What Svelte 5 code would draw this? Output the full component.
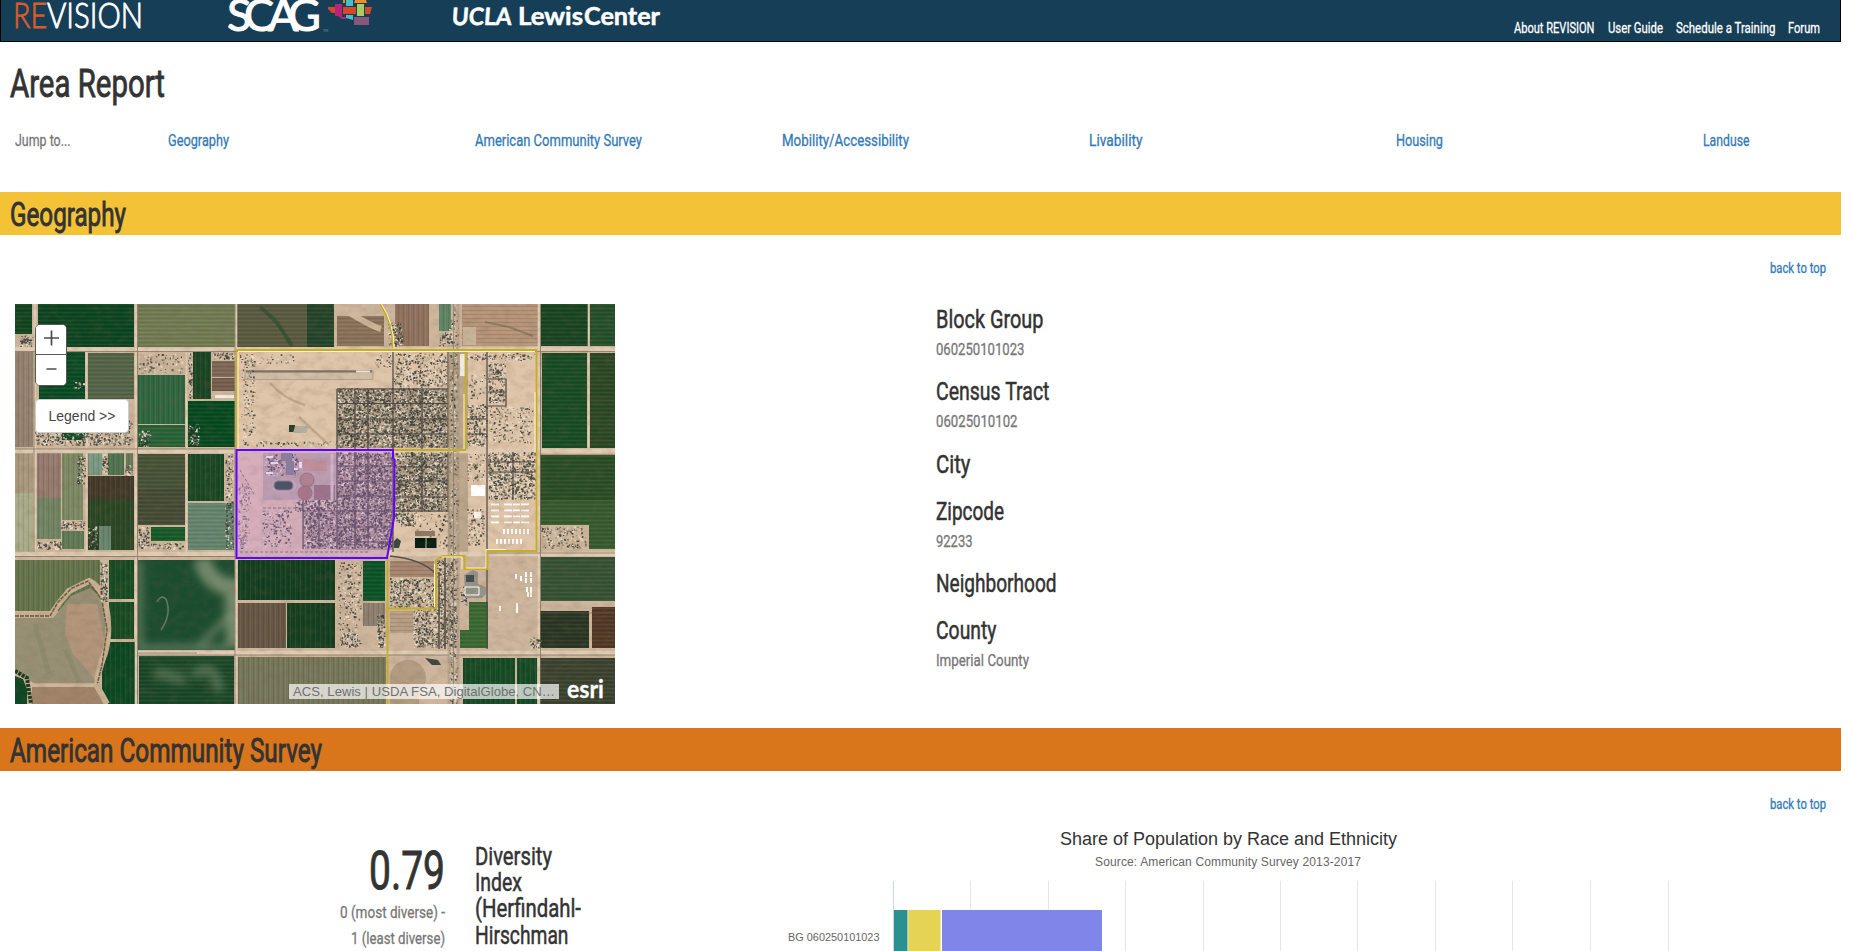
<script>
  const links = [
    ['About REVISION', 80.5], ['User Guide', 55], ['Schedule a Training', 99.5], ['Forum', 32]
  ];
  const jumps = [
    ['Geography', 61], ['American Community Survey', 167], ['Mobility/Accessibility', 127],
    ['Livability', 53.5], ['Housing', 47], ['Landuse', 46.5]
  ];
  const facts = [
    ['Block Group', 107.5, '060250101023', 88.5], ['Census Tract', 113.5, '06025010102', 81.5],
    ['City', 34.5, '', 0], ['Zipcode', 68, '92233', 36.5], ['Neighborhood', 120.5, '', 0],
    ['County', 60.5, 'Imperial County', 93]
  ];
  const indexLines = [['Diversity', 77], ['Index', 47], ['(Herfindahl-', 106], ['Hirschman', 93.5]];
  const gridLines = [970.5, 1048.5, 1125.5, 1203.5, 1280.5, 1357.5, 1435.5, 1512.5, 1590.5, 1668.5];

  // Farm parcels: x, y, width, height, colour, row direction
  const fields = [
    [0,0,17,30,'#10451f','h'],[23,0,96,43,'#0d4521','h'],[123,0,97,43,'#737c54','h'],[222,0,70,43,'#5a5b40','h'],[292,0,27,43,'#25452a','h'],
    [0,48,18,95,'#958370','v'],[24,48,46,47,'#084c24','h'],[73,49,46,46,'#546548','h'],[123,71,47,49,'#306640','v'],
    [123,121,47,22,'#296338','h'],[178,48,18,47,'#1b4624','v'],[197,57,23,16,'#7f6857','h'],[197,74,23,13,'#765f4e','h'],[173,97,47,46,'#064a20','h'],[47,127,23,9,'#135529','h'],
    [0,149,18,40,'#aa997f','v'],[0,189,18,62,'#aaad89','v'],[22,149,24,45,'#967b6f','v'],[22,194,24,41,'#728565','v'],[47,149,21,67,'#7d8a65','v'],[47,227,22,18,'#607b55','v'],
    [73,149,14,22,'#7a9a82','v'],[93,149,16,22,'#507350','v'],[111,149,7,18,'#68795a','v'],[73,172,46,23,'#443a2a','v'],[73,195,46,51,'#2b4726','v'],[84,222,12,24,'#69866f','v'],
    [123,150,47,35,'#465337','h'],[123,185,47,36,'#444c36','h'],[136,223,34,14,'#155c28','h'],[173,150,36,47,'#1b4824','v'],[173,199,46,47,'#65866f','h'],
    [0,256,85,51,'#65754b','v'],[94,256,25,39,'#174c23','v'],[94,298,25,37,'#184c23','v'],[87,338,33,62,'#0d4822','v'],
    [123,256,97,90,'#1c4c2f','x'],[124,352,95,48,'#194727','h'],[223,256,97,40,'#143f20','v'],[223,299,48,45,'#665646','v'],[272,299,48,45,'#164020','v'],
    [223,353,148,47,'#77775a','v'],[348,257,22,40,'#0a5428','h'],[348,299,22,23,'#8e7f6f','v'],
    [322,12,47,30,'#8b735b','h'],[380,0,34,42,'#90735f','v'],[424,0,12,27,'#5e8564','v'],[447,0,76,42,'#b6957a','h'],
    [526,0,47,42,'#194522','h'],[575,0,25,42,'#24502a','h'],[527,49,45,95,'#184c24','h'],[575,49,25,95,'#2b4824','h'],[525,151,75,45,'#294e24','h'],[525,196,75,25,'#365b2f','h'],[574,220,26,25,'#365b2f','h'],
    [526,253,74,44,'#365234','h'],[525,307,49,37,'#2a3723','h'],[577,303,23,41,'#523925','h'],
    [375,257,44,16,'#a78670','h'],[375,307,23,22,'#b99e83','h'],[454,298,19,46,'#3b6934','h'],[445,326,28,18,'#3b6934','h'],[448,354,52,46,'#164c25','v'],[502,354,20,46,'#164c25','v'],[525,354,75,46,'#3b432f','h']
  ];

  let seed = 4817;
  const rnd = () => ((seed = (seed * 16807) % 2147483647) / 2147483647);
  function specks(x, y, w, h, n, s = 1.5) {
    let d = '';
    for (let i = 0; i < n; i++) {
      const a = 0.6 + rnd() * s, b = 0.6 + rnd() * s;
      d += `M${(x + rnd() * (w - a)).toFixed(1)} ${(y + rnd() * (h - b)).toFixed(1)}h${a.toFixed(1)}v${b.toFixed(1)}h-${a.toFixed(1)}z`;
    }
    return d;
  }

  // Built-up areas: x, y, width, height, density
  const built = [
    [322,84,111,60,.3],[380,49,53,34,.11],[452,100,21,43,.2],[473,58,18,42,.2],[380,148,53,60,.3],[473,148,48,48,.24],
    [452,49,68,8,.12],[474,102,45,38,.07],[454,70,18,26,.06],[20,116,98,26,.18],[58,75,12,11,.18],[5,31,14,12,.25],[123,126,14,17,.18],
    [173,49,5,46,.18],[173,119,12,23,.2],[123,50,46,20,.06],[197,48,23,8,.18],[62,152,9,29,.22],[87,150,7,20,.18],[110,161,8,11,.18],
    [46,217,24,9,.2],[73,222,10,24,.2],[123,223,12,22,.2],[22,237,25,9,.2],[136,239,34,7,.14],[210,150,9,95,.14],
    [375,274,45,30,.2],[398,305,44,39,.25],[422,255,18,50,.24],[323,258,24,85,.07],[222,50,60,10,.05],[226,50,15,92,.06],[241,137,82,6,.08],
    [526,222,46,23,.09],[380,208,22,15,.28],[400,210,34,35,.05],[452,204,18,38,.1],[452,150,20,28,.07],[326,329,18,15,.18],[362,310,9,34,.18],[515,333,12,12,.22],
    [373,18,16,25,.18],[424,28,15,15,.18],[445,282,8,20,.1],[360,49,18,15,.07],[378,64,54,20,.06],[434,2,10,398,.08],[85,258,8,40,.24],
    [322,148,56,97,.32],[288,208,34,37,.32],[280,196,42,12,.3],[223,180,12,60,.14],[224,232,8,13,.3],[247,205,30,38,.1],[249,150,35,22,.14]
  ];
  const darkSpecks = built.map(([x, y, w, h, k]) => specks(x, y, w, h, w * h * k * 0.7)).join('');
  const lightSpecks = built.map(([x, y, w, h, k]) => specks(x, y, w, h, w * h * k * 0.5)).join('');
  const greySpecks = built.map(([x, y, w, h, k]) => specks(x, y, w, h, w * h * k * 0.5)).join('');
  const dust = specks(0, 0, 600, 400, 1500, .8);
  const roofs = [];
  for (let r = 0; r < 4; r++) for (const [x, w] of [[476,8],[489,8],[498,7],[506,8]]) roofs.push([x, 199.5 + r * 6, w, 1.8]);
  for (let r = 0; r < 2; r++) for (let c = 0; c < 7; c++) roofs.push([(r ? 481 : 488) + c * 4, 225 + r * 10, 2, 5]);
  for (const [x, y] of [[500,270],[505,272],[510,268],[515,268],[510,274],[515,274],[511,283],[515,283],[512,288],[515,288],[484,302],[501,299],[501,304]]) roofs.push([x, y, 2, 5]);
</script>

{#snippet fit(text, width, size, height, baseline)}
  <svg class="fit" {width} {height}><text x="0" y={baseline} font-size={size} textLength={width} lengthAdjust="spacingAndGlyphs">{text}</text></svg>
{/snippet}

<div class="page">
  <header>
    <div class="logos">
      <svg class="revision" width="130" height="41">
        <text y="28" font-size="34.5"><tspan x="-1" fill="#d95b27" stroke="#d95b27" textLength="34" lengthAdjust="spacingAndGlyphs">RE</tspan><tspan x="33" fill="#fff" stroke="#fff" textLength="96" lengthAdjust="spacingAndGlyphs">VISION</tspan></text>
      </svg>
      <svg class="scag" width="148" height="41" viewBox="228 0 148 41">
        <text x="227 244 268 288" y="31" font-size="45">SCAG</text>
        <text x="323" y="32" font-size="3.5" class="tm">TM</text>
        <path fill="#d84727" d="M328 7h7v6h-3l-4-4zM343 7h13v7h-13zM365 7h7l-2 7h-5z"/>
        <path fill="#b92478" d="M335 4h7v13h4v2h-4l-4-3h-3z"/>
        <path fill="#48bec6" d="M346 0h7v6h-7zM346 15h7v5l-7-2z"/>
        <path fill="#f28d20" d="M343 0h2v3h-2zM355 0h11l1 3h-13z"/>
        <path fill="#a5cf62" d="M357 4h7v12h-7z"/>
        <path fill="#895777" d="M354 17h15v8h-15z"/>
      </svg>
      <svg class="ucla" width="210" height="41">
        <g transform="skewX(-4)"><text x="0" y="25" font-size="24" textLength="60" lengthAdjust="spacingAndGlyphs">UCLA</text></g>
        <text x="65" y="25" font-size="24" textLength="65" lengthAdjust="spacingAndGlyphs">Lewis</text>
        <text x="131" y="25" font-size="24" textLength="76" lengthAdjust="spacingAndGlyphs">Center</text>
      </svg>
    </div>
    <nav class="links">
      {#each links as [label, w]}<a href="#top">{@render fit(label, w, 15.5, 20, 15.6)}</a>{/each}
    </nav>
  </header>

  <h1>{@render fit('Area Report', 155, 39.5, 60, 55)}</h1>

  <nav class="jump">
    <span>{@render fit('Jump to...', 55.5, 16.7, 30, 23.5)}</span>
    {#each jumps as [label, w]}<a href="#top">{@render fit(label, w, 16.7, 30, 23.5)}</a>{/each}
  </nav>

  <h2 class="geo">{@render fit('Geography', 116, 33, 43, 33.5)}</h2>
  <div class="back first"><a href="#top">{@render fit('back to top', 56, 15.2, 48, 37.6)}</a></div>

  <section class="geography">
    <div class="map">
      <svg class="aerial" width="600" height="400">
        <defs>
          <pattern id="rows-h" width="8" height="4" patternUnits="userSpaceOnUse"><path d="M0 .5h8" stroke="#fff" stroke-opacity=".05"/><path d="M0 2.5h8" stroke="#000" stroke-opacity=".09"/></pattern>
          <pattern id="rows-v" width="5" height="8" patternUnits="userSpaceOnUse"><path d="M.5 0v8" stroke="#fff" stroke-opacity=".05"/><path d="M3.5 0v8" stroke="#000" stroke-opacity=".09"/></pattern>
          <filter id="grain" x="0" y="0" width="100%" height="100%">
            <feTurbulence type="fractalNoise" baseFrequency=".09 .13" numOctaves="4" seed="7"/>
            <feColorMatrix values="0 0 0 0 .16  0 0 0 0 .12  0 0 0 0 .06  1.6 0 0 0 -.66"/>
          </filter>
          <filter id="soft"><feGaussianBlur stdDeviation="4"/></filter>
          <clipPath id="mottle"><rect x="123" y="256" width="97" height="144"/></clipPath>
        </defs>
        <rect width="600" height="400" fill="#ceb69d"/>
        <rect x="222" y="48" width="302" height="200" fill="#dfc5aa"/>
        <rect x="378" y="148" width="55" height="60" fill="#b7a28b"/>
        <rect x="322" y="84" width="111" height="60" fill="#b4a088"/>
        <rect x="322" y="148" width="56" height="98" fill="#b09c88"/>
        <rect x="288" y="208" width="34" height="37" fill="#b8a68f"/>
        <rect x="433" y="48" width="20" height="200" fill="#bda78f"/>
        {#each fields as [x, y, w, h, c, dir]}
          <rect {x} {y} width={w} height={h} fill={c}/>
          {#if dir !== 'x'}<rect {x} {y} width={w} height={h} fill="url(#rows-{dir})"/>{/if}
        {/each}
        <g clip-path="url(#mottle)" fill="none" stroke="#9aa588" filter="url(#soft)">
          <path d="M187 255q6 26 31 28l2 60" stroke-width="17" opacity=".7"/>
          <path d="M180 346l36-36M124 256v88h90" stroke-width="6" opacity=".6"/>
          <path d="M140 368l30 8M178 372q22-18 26 16" stroke-width="10" opacity=".45"/>
        </g>
        <path d="M142 298q4-8 9-3 6 15-5 31" fill="none" stroke="#8d9a84" stroke-width="1.600" opacity=".6"/>
        <path d="M0 314h38l18-22 19-8 13 10 6 48-10 38H20L0 368z" fill="#989075"/>
        <path d="M52 300h30l8 40-8 38-24-28-8-20z" fill="#b2957b"/>
        <path d="M50 345l14 33M20 320l14 50" stroke="#798062" stroke-width="5" opacity=".35"/>
        <path d="M17 383h67l9 17H17z" fill="#a1846a"/>
        <path d="M0 372l8 3 4 10v15H0z" fill="#0e4822"/>
        <path d="M0 311h36q8-13 18-24l20-10q13 6 17 25 5 26-1 47-8 19-8 33l10 18" fill="none" stroke="#c9b193" stroke-width="6"/>
        <path d="M0 312h35l8-14 14-14 16-7 14 19 5 30-5 35-5 20" fill="none" stroke="#69563f" stroke-width="1.400" stroke-dasharray="4 1"/>
        <path d="M0 367l12 7 4 26" fill="none" stroke="#203a20" stroke-width="4" stroke-dasharray="3 1"/>
        <path d="M18 380h66" stroke="#d2b598" stroke-width="1.600"/>
        <path d="M245 3q15 12 20 20t12 19" fill="none" stroke="#24492a" stroke-width="4" opacity=".6"/>
        <path d="M320 0q35 22 46 25" fill="none" stroke="#cfb79d" stroke-width="6"/>
        <path d="M470 18l24 5 24 9" fill="none" stroke="#766b4f" stroke-width="2" opacity=".6"/>
        <rect x="448" y="23" width="13" height="18" fill="#c9b39b"/>
        <circle cx="393" cy="374" r="18" fill="#b39c82"/>
        <rect x="375" y="374" width="29" height="26" fill="#b39c82"/>

        <g stroke="#e0ccb3" fill="none">
          <path d="M0 45.500h600M0 147h600M0 250h600M121 349h479" stroke-width="4.500"/>
          <path d="M20 0v252M121 0v400M221 0v400M524 0v400" stroke-width="2.600"/>
          <path d="M71.500 48v100M171.500 48v100M71.500 150v98M171.500 150v98M573.500 0v143" stroke-width="1.600"/>
        </g>
        <g stroke="#645848" stroke-width=".9" opacity=".65" fill="none">
          <path d="M0 47.500h600M0 145h220M0 252.500h220M470 249h130M122 351h478M122 349h60M525 151h75"/>
          <path d="M122.500 0v400M220 0v400M19 48v200M525.500 0v400M526 309h75"/>
        </g>
        <path d="M230 66.500h128v9H230z" fill="#d2bda5" stroke="#a79a88" stroke-width=".8"/><path d="M231 67.500h126" stroke="#777269" stroke-width="1.800"/><path d="M341 67.500h14" stroke="#eee6db" stroke-width="2"/>
        <path d="M255 79q14 16 35 22M284 113l30 28" fill="none" stroke="#c2a98e" stroke-width="2.500"/>
        <path d={dust} fill="#fff" opacity=".05"/>
        <path d="M248 149h74v47h-74z" fill="#c0aea0"/>
        <path d={greySpecks} fill="#817969" opacity=".8"/>
        <path d={lightSpecks} fill="#f0e5d4" opacity=".9"/>
        <path d={darkSpecks} fill="#2b302b" opacity=".8"/>
        <g stroke="#4c4742" stroke-width="1.200" fill="none">
          <path d="M322 85h112M322 99.500h112M322 115h112M322 130h112M340 85v60M407 85v60M322 85v60M378 48v200M353 85v60M433 48v95"/>
          <path d="M380 163h54M380 177h54M380 193h54M380 207h54M407 148v60M433 148v60M473 75h18v27h-18M473 88h18M472 48v297M452 115h20M452 130h20M473 158h48M473 168h48M498 148v48"/>
          <path d="M322 148v97M340 148v97M353 148v97M322 162h56M322 177h56M322 192h56M288 207h90M322 223h56M322 238h56M304 196v49M288 196v49"/>
        </g>
        <path d="M434 48v352M443 0v400" stroke="#a59480" stroke-width="3" opacity=".5"/>
        <path d="M438.500 0v400" stroke="#8d8071" stroke-width=".8"/>
        <path d="M375 252q32 3 46 18M430 252v93M424 268v77" stroke="#59504a" stroke-width="1.500" fill="none"/>
        <path d="M400 234h10.500v10H400zM411.500 234h10v10h-10z" fill="#071d14"/>
        <path d="M400 227h20v5h-20z" fill="#8e7a64"/>
        <path d="M379 237l3-3 4 3-2 7h-5zM410 354l13 2 3 5h-9z" fill="#3c4740"/>
        <path d="M456 181h14v11h-14z" fill="#fff"/><path d="M445 50h5v22h-5zM200 91h19v3h-19z" fill="#f0ebe2"/>
        <path d="M459 208h7v6h-7z" fill="#faf7ef"/>
        <path d="M449 271l9-5 5 2v12l8 3v7l-4 4h-17z" fill="#96938a"/><path d="M451 271h8v7h-8z" fill="#444d4e"/><path d="M450 283h14v8h-14z" fill="none" stroke="#fff"/>
        {#each roofs as [x, y, w, h]}<rect {x} {y} width={w} height={h} fill="#fff"/>{/each}
        <path d="M274 121h6v7h-6z" fill="#263b31"/><path d="M280 122h15l-4 7h-13z" fill="#b4af9b"/>

        <path d="M251 152h7v2h-7zM256 158h7v2h-7zM251 168h7v2h-7zM276 164h7v2h-7zM284 158h3v6h-3z" fill="#fff"/>
        <path d="M266 149h11v8h-11zM271 157h8v14h-8z" fill="#7c8386"/>
        <path d="M288 155h12v12h-12zM300 157h12v10h-12z" fill="#c89d82"/>
        <path d="M299 181h21v15h-21z" fill="#93766c"/>
        <circle cx="292" cy="176" r="7" fill="#b08873" stroke="#8a7468"/><circle cx="290" cy="189" r="7" fill="#a57a69" stroke="#8a7468"/>
        <path d="M317 150v46" stroke="#d8cdc4" stroke-width="3"/>
        <rect x="257" y="175.500" width="24" height="12.500" rx="6" fill="#c8b9ae"/><rect x="259" y="177" width="19" height="9" rx="4.500" fill="#24483a" stroke="#817f77" stroke-width="1.200"/>
        <path d="M223 150h23v94h-23z" fill="#f2cdbb" opacity=".35"/>
        <path d="M225 166l14 24M227 180l9 20M225 248h130M248 204h42" stroke="#69595b" stroke-width=".8" stroke-dasharray="3 2"/>
        <rect width="600" height="400" filter="url(#grain)" opacity=".25"/>

        <path d="M221.500 146H378v8l1.500 2-.5 58-7 40H221.500z" fill="#b46fe0" fill-opacity=".28"/>
        <g fill="none" stroke="#c5ad27" stroke-width="1.800">
          <path d="M221.500 146V46H521.500V247H472.500V265H449.500V252H428L421 256.500V304.500H372.500M450.500 46V146H378M372.500 254V400M365 0Q378 20 378 44"/>
        </g>
        <g fill="none" stroke="#fff6c0" stroke-width="1">
          <path d="M223 47.500H520M223 145V48M366.500 0Q379 19 379 44M449 90v55M520 88v60M451 264h20v-18.500h20M427 253h20v12M419.500 260v43"/>
        </g>
        <path d="M221.500 146H378v8l1.500 2-.5 58-7 40H221.500z" fill="none" stroke="#6400ff" stroke-width="2"/>
      </svg>
      <div class="zoom">
        <button aria-label="Zoom in"><svg width="17" height="17"><path d="M1 8h15M8.500 .5v15" stroke="#4c4c4c" stroke-width="1.700"/></svg></button>
        <button aria-label="Zoom out"><svg width="17" height="17"><path d="M3.500 8h10" stroke="#4c4c4c" stroke-width="1.700"/></svg></button>
      </div>
      <button class="legend">Legend &gt;&gt;</button>
      <div class="credit">{@render fit('ACS, Lewis | USDA FSA, DigitalGlobe, CN…', 262, 13, 15, 12)}</div>
      <div class="esri">{@render fit('esri', 37, 24, 24, 20)}</div>
    </div>
    <dl>
      {#each facts as [name, w, value, vw]}
        <div class="fact">
          <dt>{@render fit(name, w, 26.5, 33, 24.3)}</dt>
          {#if value}<dd>{@render fit(value, vw, 16.5, 25, 17.5)}</dd>{/if}
        </div>
      {/each}
    </dl>
  </section>

  <h2 class="acs">{@render fit('American Community Survey', 312, 33, 43, 33.5)}</h2>
  <div class="back"><a href="#top">{@render fit('back to top', 56, 15.2, 48, 37.6)}</a></div>

  <section class="survey">
    <div class="score">
      <div class="value">{@render fit('0.79', 76, 54.5, 80, 68.5)}</div>
      <div>{@render fit('0 (most diverse) -', 105, 16.5, 26, 17.6)}</div>
      <div>{@render fit('1 (least diverse)', 94, 16.5, 26, 17.6)}</div>
    </div>
    <div class="index">
      {#each indexLines as [label, w]}<div>{@render fit(label, w, 26.5, 26.4, 21.5)}</div>{/each}
    </div>
    <svg class="chart" width="1044" height="131" viewBox="782 820 1044 131">
      <text x="1228.5" y="845" font-size="18" fill="#333" text-anchor="middle" textLength="337">Share of Population by Race and Ethnicity</text>
      <text x="1228" y="866" font-size="12" fill="#666" text-anchor="middle" textLength="266">Source: American Community Survey 2013-2017</text>
      {#each gridLines as x}<path d="M{x} 881v70" stroke="#e6e6e6"/>{/each}
      <path d="M893.5 881v70" stroke="#ccd6eb"/>
      <rect x="894" y="910" width="13.5" height="41" fill="#2b908f"/>
      <rect x="908.2" y="910" width="32.3" height="41" fill="#e4d354"/>
      <rect x="942" y="910" width="160" height="41" fill="#8085e9"/>
      <text x="879.5" y="941" font-size="11" fill="#666" text-anchor="end" textLength="91.5" lengthAdjust="spacingAndGlyphs">BG 060250101023</text>
    </svg>
  </section>
</div>

<style>
  :global(body) { background: #fff; }
  .page { width: 1841px; height: 951px; overflow: hidden; font-family: Roboto, sans-serif; color: #333; }
  .fit { display: block; fill: currentColor; stroke: currentColor; stroke-width: .3px; overflow: visible; }
  h1 .fit, h2 .fit, .value .fit { stroke-width: .9px; }
  dt .fit, .index .fit { stroke-width: .5px; }
  a { color: #337ab7; text-decoration: none; }
  h1, h2, dl, dd { margin: 0; font-weight: 400; }

  header { box-sizing: border-box; height: 42px; display: flex; justify-content: space-between; background: #173e57; border: 1px solid #000; border-top: 0; overflow: hidden; }
  .logos { display: flex; padding-left: 13px; }
  .logos svg { display: block; }
  .revision { font-family: Lato, sans-serif; font-weight: 300; stroke-width: .9px; }
  .scag { margin-left: 84px; font-family: Lato, sans-serif; font-weight: 400; fill: #fff; }
  .scag text:first-child { stroke: #fff; stroke-width: 1px; }
  .scag .tm { fill: #7890a0; }
  .ucla { margin-left: 77px; font-family: Lato, sans-serif; font-weight: 700; fill: #fff; stroke: #fff; stroke-width: .5px; }
  .links { display: flex; gap: 13px; padding: 17px 20px 0 0; }
  .links a { color: #fff; }

  h1 { height: 80px; padding-left: 10px; }
  .jump { height: 70px; display: grid; grid-template-columns: 1fr repeat(5, 2fr) 1fr; color: #777; }
  .jump > * { padding-left: 15px; }
  h2 { height: 43px; padding-left: 10px; }
  .geo { background: #f4c237; }
  .acs { background: #d9761b; }
  .back { height: 49px; display: flex; justify-content: flex-end; padding-right: 15px; }
  .back.first { height: 69px; }

  .geography { height: 424px; display: grid; grid-template-columns: 1fr 1fr; }
  .map { position: relative; width: 600px; height: 400px; margin-left: 15px; overflow: hidden; }
  .aerial { display: block; }
  .zoom { position: absolute; left: 20px; top: 20px; box-sizing: border-box; width: 32px; height: 62px; border: 1px solid #57585a; border-radius: 5px; background: #fff; overflow: hidden; }
  .zoom button { display: grid; place-items: center; box-sizing: border-box; width: 30px; height: 30px; padding: 0; border: 0; background: #fff; }
  .zoom button:first-child { border-bottom: 1px solid #57585a; }
  .zoom svg { display: block; margin-top: -2px; }
  .legend { position: absolute; left: 20px; top: 95px; width: 94px; height: 34px; padding: 0; border: 1px solid #ccc; border-radius: 4px; background: #fff; color: #444; font: 14px "Liberation Sans", sans-serif; }
  .credit { position: absolute; left: 274px; top: 380px; width: 270px; height: 15px; padding-left: 4px; box-sizing: border-box; background: rgba(255, 255, 255, .7); color: #707070; font-family: "Liberation Sans", sans-serif; }
  .credit .fit { stroke: none; }
  .esri { position: absolute; left: 552px; top: 374px; color: #fff; font-family: Lato, sans-serif; font-weight: 700; }

  dl { padding-left: 15px; display: flex; flex-direction: column; }
  .fact { padding-bottom: 14.3px; }
  dd { color: #777; }

  .survey { height: 131px; display: grid; grid-template-columns: 445px 307px 1fr; overflow: hidden; }
  .score { display: flex; flex-direction: column; align-items: flex-end; color: #777; }
  .value { color: #333; }
  .index { padding: 22.7px 0 0 30px; }
  .chart { font-family: "Liberation Sans", sans-serif; margin-left: 30px; display: block; }
</style>
